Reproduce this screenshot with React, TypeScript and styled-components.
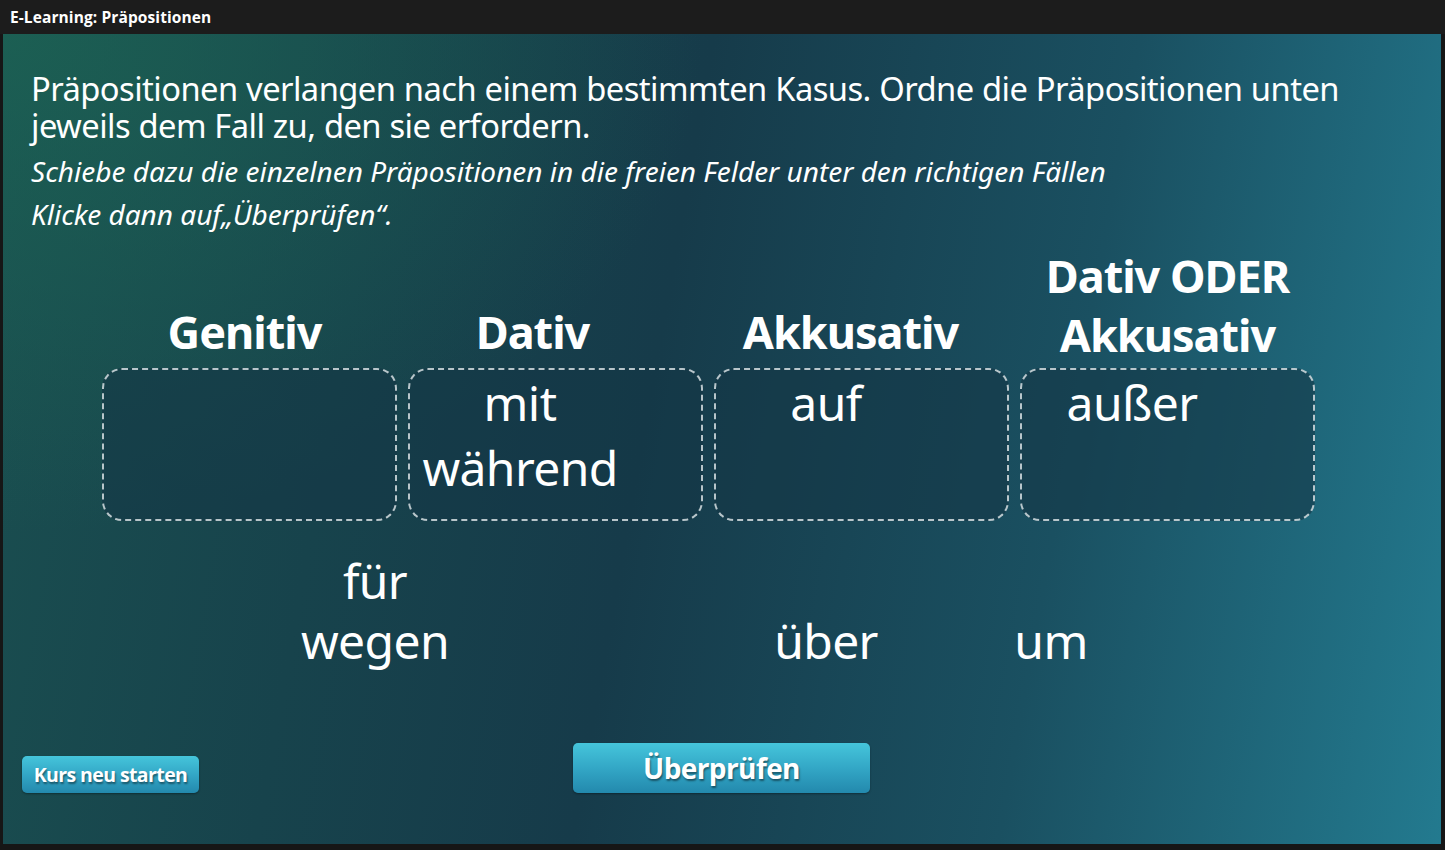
import React from "react";
import styled, { createGlobalStyle } from "styled-components";

const Global = createGlobalStyle`
  html, body { margin: 0; padding: 0; background: #141414; }
  body { width: 1445px; height: 850px; overflow: hidden; }
`;

const Frame = styled.div`
  width: 1445px;
  height: 850px;
  display: flex;
  flex-direction: column;
  background: #161616;
`;

const TitleBar = styled.div`
  height: 34px;
  flex: none;
  display: flex;
  align-items: center;
  padding-left: 10px;
  background: #1c1c1c;
  color: #ffffff;
  font-family: "Open Sans", sans-serif;
  font-weight: 700;
  font-size: 15.5px;
  letter-spacing: 0.1px;
`;

const Stage = styled.div`
  flex: none;
  height: 810px;
  margin: 0 4px 0 3px;
  box-sizing: border-box;
  padding: 36px 0 0 28px;
  display: flex;
  flex-direction: column;
  color: #ffffff;
  font-family: "Noto Sans", sans-serif;
  background:
    radial-gradient(ellipse 700px 500px at 0% 0%, rgba(28, 100, 84, 0.75), rgba(28, 100, 84, 0) 100%),
    linear-gradient(100deg, #1a4f50 0%, #17434c 25%, #163b4a 45%, #1a5061 72%, #237a8f 100%);
`;

const Lead = styled.p`
  margin: 0;
  font-size: 32.7px;
  line-height: 37px;
  letter-spacing: -0.55px;
  word-spacing: 0.5px;
`;

const Hints = styled.div`
  margin-top: 6px;
  display: flex;
  flex-direction: column;
`;

const Hint = styled.p`
  margin: 0;
  font-style: italic;
  font-size: 28px;
  line-height: 43px;
  letter-spacing: 0;
`;

const Board = styled.div`
  margin: 10px 0 0 71px;
  display: grid;
  grid-template-columns: repeat(4, 295px);
  column-gap: 11px;
`;

const Column = styled.div`
  display: flex;
  flex-direction: column;
  justify-content: flex-end;
`;

const Heading = styled.h2<{ $shift: number; $lift: number }>`
  margin: 0 0 ${(p) => 4 + p.$lift}px ${(p) => p.$shift}px;
  text-align: center;
  font-size: 45px;
  line-height: 59px;
  font-weight: 700;
  letter-spacing: -1px;
`;

const DropBox = styled.div`
  height: 153px;
  box-sizing: border-box;
  border: 2px dashed rgba(214, 222, 226, 0.85);
  border-radius: 20px;
  background: rgba(20, 55, 70, 0.6);
  display: flex;
  flex-direction: column;
  align-items: flex-start;
`;

const PlacedGroup = styled.div`
  margin-left: 10px;
  width: 200px;
  display: flex;
  flex-direction: column;
  align-items: center;
`;

const Word = styled.span<{ $lh: number }>`
  font-size: 48px;
  line-height: ${(p) => p.$lh}px;
  letter-spacing: -0.6px;
  white-space: nowrap;
`;

const Pool = styled.div`
  margin-top: 30px;
  display: flex;
  align-items: flex-end;
`;

const PoolStack = styled.div<{ $left: number }>`
  margin-left: ${(p) => p.$left}px;
  width: 200px;
  display: flex;
  flex-direction: column;
  align-items: center;
`;

const Footer = styled.div`
  margin-top: 72px;
  display: flex;
  align-items: flex-end;
  margin-left: -9px;
`;

const Button = styled.button<{ $w: number; $h: number; $size: number }>`
  width: ${(p) => p.$w}px;
  height: ${(p) => p.$h}px;
  border: none;
  border-radius: 5px;
  padding: 0;
  color: #ffffff;
  font-family: "Open Sans", sans-serif;
  font-weight: 700;
  font-size: ${(p) => p.$size}px;
  letter-spacing: -0.6px;
  text-shadow: 1px 2px 2px rgba(0, 0, 0, 0.45);
  background: linear-gradient(180deg, #45c5db 0%, #33a7c6 50%, #2389ad 100%);
  box-shadow: 0 1px 2px rgba(0, 0, 0, 0.35);
  cursor: pointer;
`;

const CheckButton = styled(Button)`
  margin-left: 374px;
`;

const columns = [
  { title: ["Genitiv"], shift: -10, lift: 3, words: [] as string[] },
  { title: ["Dativ"], shift: -46, lift: 3, words: ["mit", "während"] },
  { title: ["Akkusativ"], shift: -22, lift: 3, words: ["auf"] },
  { title: ["Dativ ODER", "Akkusativ"], shift: 0, lift: 0, words: ["außer"] },
];

export default function App() {
  return (
    <>
      <Global />
      <Frame>
        <TitleBar>E-Learning: Präpositionen</TitleBar>
        <Stage>
          <Lead>
            Präpositionen verlangen nach einem bestimmten Kasus. Ordne die Präpositionen unten
            <br />
            jeweils dem Fall zu, den sie erfordern.
          </Lead>
          <Hints>
            <Hint>Schiebe dazu die einzelnen Präpositionen in die freien Felder unter den richtigen Fällen</Hint>
            <Hint>Klicke dann auf„Überprüfen“.</Hint>
          </Hints>
          <Board>
            {columns.map((c) => (
              <Column key={c.title.join(" ")}>
                <Heading $shift={c.shift} $lift={c.lift}>
                  {c.title.map((t, i) => (
                    <React.Fragment key={t}>
                      {i > 0 && <br />}
                      {t}
                    </React.Fragment>
                  ))}
                </Heading>
                <DropBox>
                  {c.words.length > 0 && (
                    <PlacedGroup>
                      {c.words.map((w) => (
                        <Word key={w} $lh={65}>{w}</Word>
                      ))}
                    </PlacedGroup>
                  )}
                </DropBox>
              </Column>
            ))}
          </Board>
          <Pool>
            <PoolStack $left={244}>
              <Word $lh={60}>für</Word>
              <Word $lh={60}>wegen</Word>
            </PoolStack>
            <PoolStack $left={251}>
              <Word $lh={60}>über</Word>
            </PoolStack>
            <PoolStack $left={25}>
              <Word $lh={60}>um</Word>
            </PoolStack>
          </Pool>
          <Footer>
            <Button $w={177} $h={37} $size={19.5}>Kurs neu starten</Button>
            <CheckButton $w={297} $h={50} $size={28}>Überprüfen</CheckButton>
          </Footer>
        </Stage>
      </Frame>
    </>
  );
}
